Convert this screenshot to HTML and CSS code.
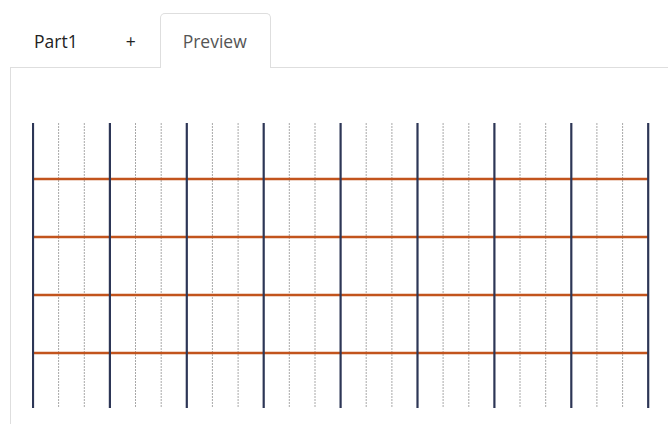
FILE: index.html
```html
<!DOCTYPE html>
<html lang="en">
<head>
  <meta charset="UTF-8" />
  <meta name="viewport" content="width=device-width, initial-scale=1" />
  <title>Preview</title>
  <link rel="stylesheet" href="styles.css">
</head>
<body>
  <ul class="tabs">
    <li class="tab">Part1</li>
    <li class="tab tab-add">+</li>
    <li class="tab active">Preview</li>
  </ul>

  <div class="panel">
    <svg class="grid" width="622" height="290" viewBox="0 0 622 290">
      <g class="minor">
        <line x1="26.6" y1="0" x2="26.6" y2="285" />
        <line x1="52.3" y1="0" x2="52.3" y2="285" />
        <line x1="103.5" y1="0" x2="103.5" y2="285" />
        <line x1="129.2" y1="0" x2="129.2" y2="285" />
        <line x1="180.4" y1="0" x2="180.4" y2="285" />
        <line x1="206.1" y1="0" x2="206.1" y2="285" />
        <line x1="257.3" y1="0" x2="257.3" y2="285" />
        <line x1="283" y1="0" x2="283" y2="285" />
        <line x1="334.2" y1="0" x2="334.2" y2="285" />
        <line x1="359.9" y1="0" x2="359.9" y2="285" />
        <line x1="411.1" y1="0" x2="411.1" y2="285" />
        <line x1="436.8" y1="0" x2="436.8" y2="285" />
        <line x1="488" y1="0" x2="488" y2="285" />
        <line x1="513.7" y1="0" x2="513.7" y2="285" />
        <line x1="564.9" y1="0" x2="564.9" y2="285" />
        <line x1="590.6" y1="0" x2="590.6" y2="285" />
      </g>
      <g class="rows">
        <line x1="1" y1="56" x2="617" y2="56" />
        <line x1="1" y1="114" x2="617" y2="114" />
        <line x1="1" y1="172" x2="617" y2="172" />
        <line x1="1" y1="230" x2="617" y2="230" />
      </g>
      <g class="major">
        <line x1="1" y1="0" x2="1" y2="285" />
        <line x1="77.9" y1="0" x2="77.9" y2="285" />
        <line x1="154.8" y1="0" x2="154.8" y2="285" />
        <line x1="231.7" y1="0" x2="231.7" y2="285" />
        <line x1="308.6" y1="0" x2="308.6" y2="285" />
        <line x1="385.5" y1="0" x2="385.5" y2="285" />
        <line x1="462.4" y1="0" x2="462.4" y2="285" />
        <line x1="539.3" y1="0" x2="539.3" y2="285" />
        <line x1="616.2" y1="0" x2="616.2" y2="285" />
      </g>
    </svg>
  </div>
</body>
</html>
```

FILE: styles.css
```css
html, body {
  height: 100%;
}
body {
  margin: 0;
  display: flex;
  flex-direction: column;
  font-family: "Open Sans", "Noto Sans", sans-serif;
  background: #fff;
  color: #222;
  overflow: hidden;
}
.tabs {
  display: flex;
  list-style: none;
  margin: 0;
  padding: 13px 0 0 11px;
}
.tab {
  padding: 15px 22px 14px;
  font-size: 17.5px;
  line-height: 24px;
  border: 1px solid transparent;
  border-bottom: none;
  border-radius: 5px 5px 0 0;
}
.tab-add {
  padding: 15px 23px 14px 24px;
}
.tab.active {
  padding: 15px 23px 14px 22px;
  color: #555;
  border-color: #dedede;
  background: #fff;
  margin-bottom: -1px;
  position: relative;
}
.panel {
  flex: 1;
  margin-left: 10px;
  border-top: 1px solid #dedede;
  border-left: 1px solid #dedede;
  padding: 55px 0 0 21px;
  min-height: 0;
}
.grid {
  display: block;
}
.minor line {
  stroke: #a8a8a8;
  stroke-width: 1;
  stroke-dasharray: 2 1;
}
.rows line {
  stroke: #c2541d;
  stroke-width: 2.5;
}
.major line {
  stroke: #2d3656;
  stroke-width: 2.2;
}
```
